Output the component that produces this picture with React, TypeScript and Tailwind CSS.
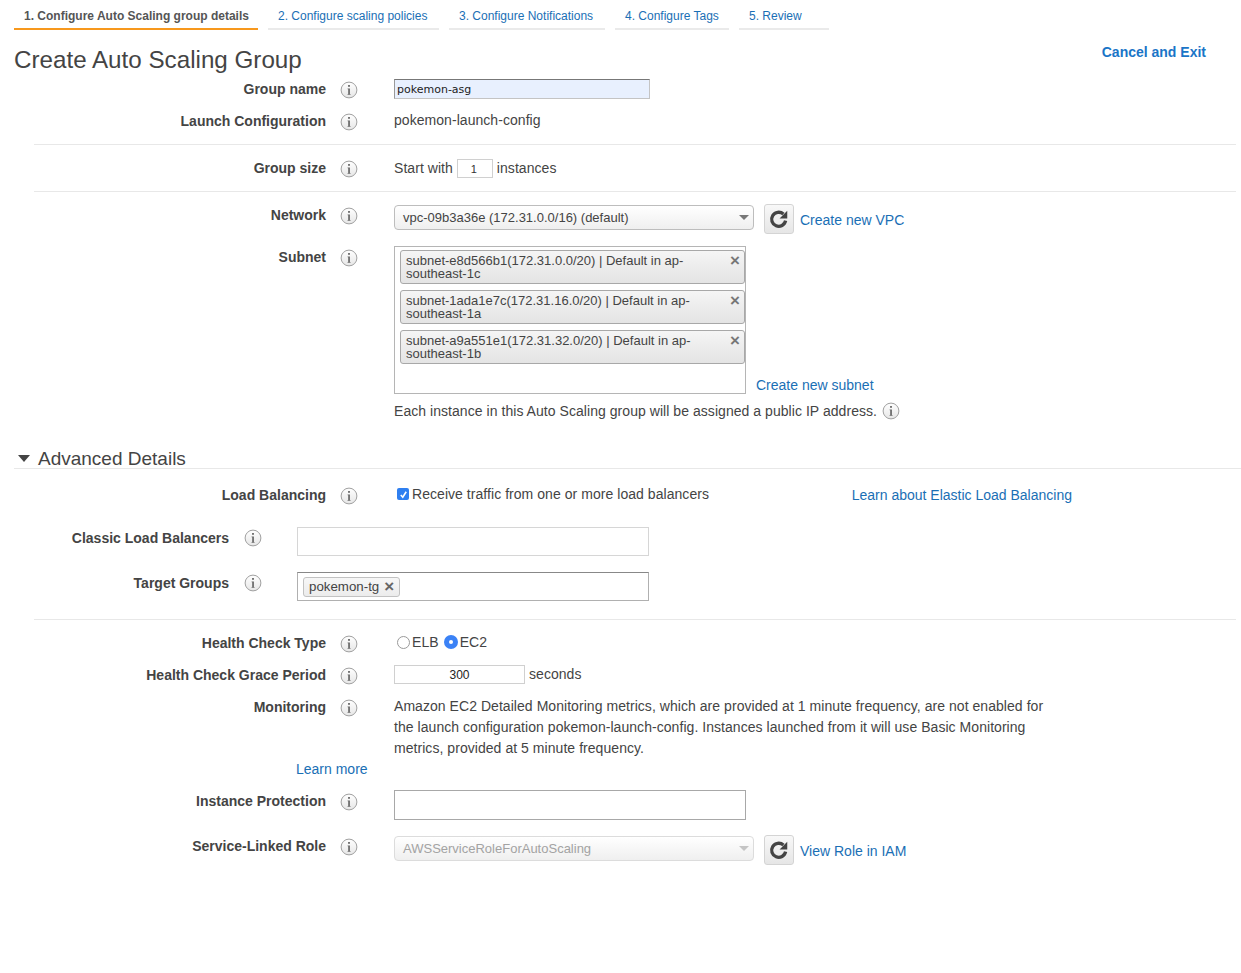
import type { ReactNode } from 'react';

const tabs = [
  { label: '1. Configure Auto Scaling group details', width: 'w-[244px]', active: true },
  { label: '2. Configure scaling policies', width: 'w-[171px]' },
  { label: '3. Configure Notifications', width: 'w-[156px]' },
  { label: '4. Configure Tags', width: 'w-[114px]' },
  { label: '5. Review', width: 'w-[90px]' },
];

const subnets = [
  'subnet-e8d566b1(172.31.0.0/20) | Default in ap-southeast-1c',
  'subnet-1ada1e7c(172.31.16.0/20) | Default in ap-southeast-1a',
  'subnet-a9a551e1(172.31.32.0/20) | Default in ap-southeast-1b',
];

function InfoIcon() {
  return (
    <svg width="18" height="18" viewBox="0 0 18 18" className="shrink-0">
      <defs>
        <linearGradient id="infoFill" x1="0" y1="0" x2="0" y2="1">
          <stop offset="0" stopColor="#ffffff" />
          <stop offset="1" stopColor="#e6e6e6" />
        </linearGradient>
      </defs>
      <circle cx="9" cy="9" r="7.9" fill="url(#infoFill)" stroke="#a0a0a0" strokeWidth="1" />
      <rect x="8.1" y="4" width="1.8" height="1.8" fill="#666" />
      <path d="M7.6 7.4h2.3V13h.6v.8H7.6V13h.6V8.2h-.6z" fill="#666" />
    </svg>
  );
}

function RefreshIcon() {
  return (
    <svg width="22" height="22" viewBox="0 0 20 20">
      <path d="M16 11.5a6.4 6.4 0 1 1-2-6" fill="none" stroke="#444" strokeWidth="3" />
      <polygon points="17.5,2.5 17.5,9.5 10.5,9.5" fill="#444" />
    </svg>
  );
}

function Row({ label, height, children }: { label: string; height: string; children?: ReactNode }) {
  return (
    <div className={`flex items-start ${height}`}>
      <div className="w-[312px] text-right font-bold leading-5 text-[#444]">{label}</div>
      <div className="ml-[14px] w-[18px] pt-[2px]">
        <InfoIcon />
      </div>
      <div className="ml-[36px] min-w-0 flex-1 leading-5 tracking-[0.05px]">{children}</div>
    </div>
  );
}

function NarrowRow({ label, height, children }: { label: string; height: string; children?: ReactNode }) {
  return (
    <div className={`flex items-start ${height}`}>
      <div className="w-[215px] text-right font-bold leading-5 text-[#444]">{label}</div>
      <div className="ml-[15px] w-[18px] pt-[1px]">
        <InfoIcon />
      </div>
      <div className="ml-[35px]">{children}</div>
    </div>
  );
}

function Divider() {
  return <div className="ml-[20px] mr-[5px] h-px bg-[#e8e8e8]" />;
}

function RefreshButton() {
  return (
    <div className="flex h-[30px] w-[30px] shrink-0 items-center justify-center rounded-[3px] border border-[#d4d4d4] bg-gradient-to-b from-[#f8f8f8] to-[#e6e6e6]">
      <RefreshIcon />
    </div>
  );
}

function SelectBox({ value, disabled }: { value: string; disabled?: boolean }) {
  return (
    <div
      className={`flex h-[25px] w-[360px] items-center justify-between rounded-[4px] border pl-2 pr-[4px] bg-gradient-to-b from-white to-[#efefef] ${
        disabled ? 'border-[#dcdcdc] text-[#a3a3a3]' : 'border-[#bdbdbd] text-[#444]'
      }`}
    >
      <span className="text-[13px] tracking-normal">{value}</span>
      <span
        className={`h-0 w-0 border-x-[5px] border-t-[5px] border-x-transparent ${
          disabled ? 'border-t-[#c4c4c4]' : 'border-t-[#777]'
        }`}
      />
    </div>
  );
}

function SubnetChip({ text }: { text: string }) {
  return (
    <div className="relative w-[345px] rounded-[3px] border border-[#a8a8a8] bg-gradient-to-b from-[#f5f5f5] to-[#e4e4e4] pb-[3px] pl-[5px] pr-[40px] pt-[3px] text-[13px] leading-[13px] tracking-normal text-[#444]">
      {text}
      <span className="absolute right-[4px] top-[2px] text-[17px] font-bold leading-[15px] text-[#777]">×</span>
    </div>
  );
}

export default function App() {
  return (
    <div className="min-h-[973px] bg-white font-['Liberation_Sans',Arial,sans-serif] text-[14px] text-[#444]">
      <div className="flex gap-[10px] pl-[14px] h-[30px]">
        {tabs.map((tab) => (
          <div
            key={tab.label}
            className={`h-[30px] border-b-2 pl-[10px] pt-[8px] text-[12px] leading-4 ${tab.width} ${
              tab.active ? 'border-[#f7981d] font-bold text-[#555]' : 'border-[#eaeaea] text-[#1a6fb5]'
            }`}
          >
            {tab.label}
          </div>
        ))}
      </div>

      <div className="flex h-[49px] items-start justify-between pl-[14px] pr-[35px]">
        <h1 className="pt-[14px] text-[24.2px] font-normal leading-[32px] text-[#444]">Create Auto Scaling Group</h1>
        <a className="pt-[13px] font-bold leading-[18px] text-[#1a75c7]">Cancel and Exit</a>
      </div>

      <div className="pl-[14px]">
        <Row label="Group name" height="h-[32px]">
          <input
            readOnly
            value="pokemon-asg"
            className="block h-[20px] w-[256px] border border-[#c4c4c4] border-t-[#777] border-l-[#999] bg-[#e8f0fe] pl-[2px] pt-[2px] font-['DejaVu_Sans',sans-serif] text-[11px] tracking-normal text-[#222] outline-none"
          />
        </Row>
        <Row label="Launch Configuration" height="h-[33px]">
          <div className="-mt-px">pokemon-launch-config</div>
        </Row>
        <Divider />
        <div className="h-[13px]" />
        <Row label="Group size" height="h-[33px]">
          <div className="-mt-px flex items-center">
            <span>Start with</span>
            <input
              readOnly
              value="1"
              className="mx-[4px] mt-[2px] h-[19px] w-[36px] border border-[#d0d0d0] pr-[2px] text-center text-[11px] text-[#333] outline-none"
            />
            <span>instances</span>
          </div>
        </Row>
        <Divider />
        <div className="h-[13px]" />
        <Row label="Network" height="h-[42px]">
          <div className="flex items-start tracking-normal">
            <SelectBox value="vpc-09b3a36e (172.31.0.0/16) (default)" />
            <div className="ml-[10px] -mt-px">
              <RefreshButton />
            </div>
            <a className="ml-[6px] pt-[5px] text-[#1a6fb5]">Create new VPC</a>
          </div>
        </Row>
        <Row label="Subnet" height="h-[154px]">
          <div className="-mt-px flex items-end">
            <div className="flex h-[148px] w-[352px] flex-col gap-[6px] border border-[#b5b5b5] pl-[5px] pt-[3px]">
              {subnets.map((subnet) => (
                <SubnetChip key={subnet} text={subnet} />
              ))}
            </div>
            <a className="ml-[10px] mb-[-1px] tracking-normal text-[#1a6fb5]">Create new subnet</a>
          </div>
          <div className="mt-[7px] flex items-center gap-[5px]">
            <span>Each instance in this Auto Scaling group will be assigned a public IP address.</span>
            <InfoIcon />
          </div>
        </Row>
      </div>

      <div className="mx-0 mt-[47px] ml-[14px] flex h-[21px] items-center border-b border-[#e8e8e8]">
        <span className="ml-[4px] h-0 w-0 border-x-[6px] border-t-[7px] border-x-transparent border-t-[#444]" />
        <h2 className="ml-[8px] pt-[2px] text-[19px] font-normal leading-5 text-[#444]">Advanced Details</h2>
      </div>

      <div className="pl-[14px] pt-[16px]">
        <Row label="Load Balancing" height="h-[43px]">
          <div className="-mt-px flex items-start justify-between pr-[169px]">
            <label className="flex items-center">
              <span className="ml-[3px] mr-[3px] flex h-[12px] w-[12px] items-center justify-center rounded-[2px] bg-[#2f7ff0]">
                <svg width="9" height="9" viewBox="0 0 10 10">
                  <path d="M2 5.5 4.2 8 8 2" fill="none" stroke="#fff" strokeWidth="1.8" />
                </svg>
              </span>
              Receive traffic from one or more load balancers
            </label>
            <a className="pt-px tracking-normal text-[#1a6fb5]">Learn about Elastic Load Balancing</a>
          </div>
        </Row>
        <NarrowRow label="Classic Load Balancers" height="h-[45px]">
          <input readOnly className="-mt-[1px] block h-[29px] w-[352px] border border-[#d6d6d6] outline-none" />
        </NarrowRow>
        <NarrowRow label="Target Groups" height="h-[46px]">
          <div className="-mt-[1px] flex h-[29px] w-[352px] items-center border border-[#b0b0b0] border-t-[#888] pl-[5px]">
            <span className="flex h-[20px] items-center rounded-[3px] border border-[#c2c2c2] bg-gradient-to-b from-[#f7f7f7] to-[#ececec] pl-[5px] pr-[5px] text-[13.3px] text-[#444]">
              pokemon-tg
              <span className="ml-[5px] text-[17px] font-bold leading-none text-[#666]">×</span>
            </span>
          </div>
        </NarrowRow>
        <Divider />
        <div className="h-[13px]" />
        <Row label="Health Check Type" height="h-[32px]">
          <div className="-mt-px flex items-center">
            <span className="ml-[3px] mr-[2px] h-[13px] w-[13px] rounded-full border border-[#9a9a9a] bg-white" />
            ELB
            <span className="ml-[5px] mr-[2px] flex h-[14px] w-[14px] items-center justify-center rounded-full bg-[#3b82f6]">
              <span className="h-[4px] w-[4px] rounded-full bg-white" />
            </span>
            EC2
          </div>
        </Row>
        <Row label="Health Check Grace Period" height="h-[32px]">
          <div className="flex items-center">
            <input
              readOnly
              value="300"
              className="h-[19px] w-[131px] border border-[#d0d0d0] text-center text-[12px] text-[#222] outline-none"
            />
            <span className="ml-[4px] -mt-px">seconds</span>
          </div>
        </Row>
        <Row label="Monitoring" height="h-[52px]">
          <p className="-mt-px w-[660px] leading-[21px]">
            Amazon EC2 Detailed Monitoring metrics, which are provided at 1 minute frequency, are not enabled for the
            launch configuration pokemon-launch-config. Instances launched from it will use Basic Monitoring metrics,
            provided at 5 minute frequency.
          </p>
        </Row>
        <div className="h-[42px] pl-[282px] pt-[10px] leading-5">
          <a className="text-[#1a6fb5]">Learn more</a>
        </div>
        <Row label="Instance Protection" height="h-[45px]">
          <input readOnly className="-mt-[1px] block h-[30px] w-[352px] border border-[#a8a8a8] outline-none" />
        </Row>
        <Row label="Service-Linked Role" height="h-[40px]">
          <div className="flex items-start tracking-normal">
            <SelectBox value="AWSServiceRoleForAutoScaling" disabled />
            <div className="ml-[10px] -mt-px">
              <RefreshButton />
            </div>
            <a className="ml-[6px] pt-[5px] text-[#1a6fb5]">View Role in IAM</a>
          </div>
        </Row>
      </div>
    </div>
  );
}
